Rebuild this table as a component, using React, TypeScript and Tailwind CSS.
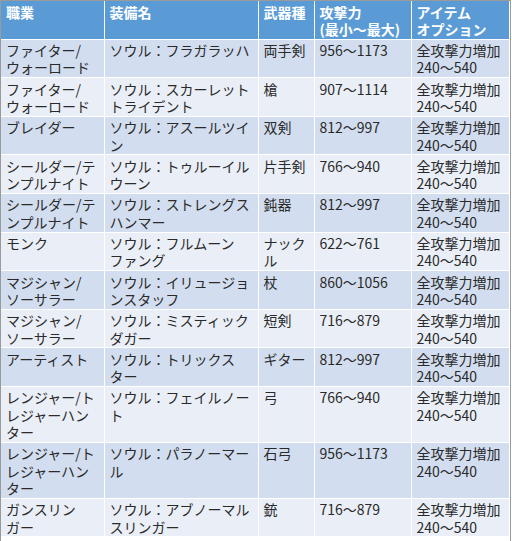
const rows: [string[], string[], string[], string][] = [
  [["ファイター/", "ウォーロード"], ["ソウル：フラガラッハ"], ["両手剣"], "956～1173"],
  [["ファイター/", "ウォーロード"], ["ソウル：スカーレット", "トライデント"], ["槍"], "907～1114"],
  [["ブレイダー"], ["ソウル：アスールツイ", "ン"], ["双剣"], "812～997"],
  [["シールダー/テ", "ンプルナイト"], ["ソウル：トゥルーイル", "ウーン"], ["片手剣"], "766～940"],
  [["シールダー/テ", "ンプルナイト"], ["ソウル：ストレングス", "ハンマー"], ["鈍器"], "812～997"],
  [["モンク"], ["ソウル：フルムーン", "ファング"], ["ナック", "ル"], "622～761"],
  [["マジシャン/", "ソーサラー"], ["ソウル：イリュージョ", "ンスタッフ"], ["杖"], "860～1056"],
  [["マジシャン/", "ソーサラー"], ["ソウル：ミスティック", "ダガー"], ["短剣"], "716～879"],
  [["アーティスト"], ["ソウル：トリックス", "ター"], ["ギター"], "812～997"],
  [["レンジャー/ト", "レジャーハン", "ター"], ["ソウル：フェイルノー", "ト"], ["弓"], "766～940"],
  [["レンジャー/ト", "レジャーハン", "ター"], ["ソウル：パラノーマー", "ル"], ["石弓"], "956～1173"],
  [["ガンスリン", "ガー"], ["ソウル：アブノーマル", "スリンガー"], ["銃"], "716～879"],
];

function Lines({ lines }: { lines: string[] }) {
  return (
    <>
      {lines.map((l, i) => (
        <div key={i} className="whitespace-nowrap h-[17.3px]">
          {l}
        </div>
      ))}
    </>
  );
}

const cell = "border border-white align-top pl-[5px] pr-0 pt-[2.5px] pb-[0.5px]";

export default function App() {
  return (
    <div
      className="w-[511px] h-[541px] bg-white border-l border-t border-r border-[#9a9a9a] text-[14px] leading-[17px] text-[#2a2a2a]"
      style={{ fontFamily: '"Noto Sans CJK JP", "Noto Sans", sans-serif' }}
    >
      <table className="table-fixed border-collapse w-[508px]">
        <colgroup>
          <col className="w-[103px]" />
          <col className="w-[154px]" />
          <col className="w-[56px]" />
          <col className="w-[97px]" />
          <col className="w-[98px]" />
        </colgroup>
        <thead>
          <tr className="bg-[#5b9bd5] text-white font-bold text-left">
            <th className={cell + " border-t-0 border-l-0"}>
              <Lines lines={["職業"]} />
            </th>
            <th className={cell + " border-t-0"}>
              <Lines lines={["装備名"]} />
            </th>
            <th className={cell + " border-t-0"}>
              <Lines lines={["武器種"]} />
            </th>
            <th className={cell + " border-t-0"}>
              <Lines lines={["攻撃力", "(最小～最大)"]} />
            </th>
            <th className={cell + " border-t-0 border-r-0"}>
              <Lines lines={["アイテム", "オプション"]} />
            </th>
          </tr>
        </thead>
        <tbody>
          {rows.map(([job, name, weapon, atk], i) => (
            <tr key={i} className={i % 2 === 0 ? "bg-[#d2deef]" : "bg-[#eaeff7]"}>
              <td className={cell + " border-l-0"}>
                <Lines lines={job} />
              </td>
              <td className={cell}>
                <Lines lines={name} />
              </td>
              <td className={cell}>
                <Lines lines={weapon} />
              </td>
              <td className={cell}>
                <Lines lines={[atk]} />
              </td>
              <td className={cell + " border-r-0"}>
                <Lines lines={["全攻撃力増加", "240～540"]} />
              </td>
            </tr>
          ))}
        </tbody>
      </table>
    </div>
  );
}
